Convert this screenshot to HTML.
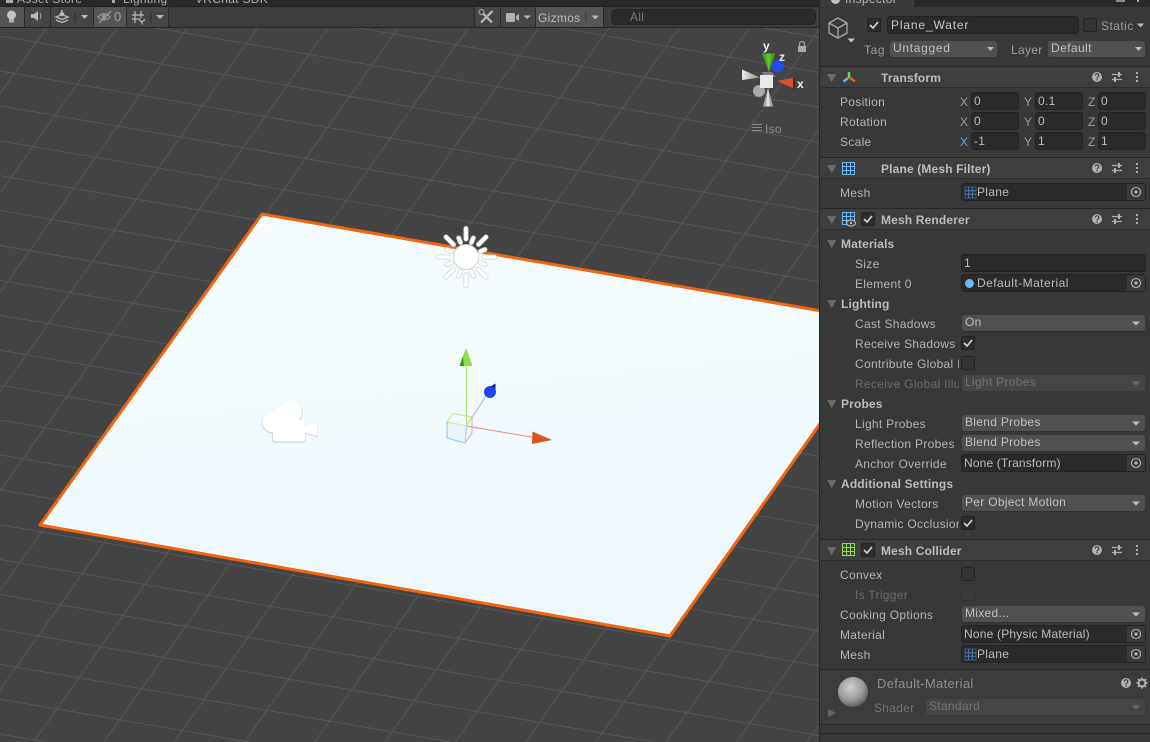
<!DOCTYPE html>
<html><head><meta charset="utf-8"><style>
html,body{margin:0;padding:0;background:#444;width:1150px;height:742px;overflow:hidden}
#r{position:relative;width:1150px;height:742px;overflow:hidden;background:#444;font-family:"Liberation Sans",sans-serif;font-size:12px;color:#b4b4b4}
#r div{position:absolute;box-sizing:border-box}
.l{white-space:nowrap;line-height:14px;letter-spacing:.3px;overflow:hidden}
.b{font-weight:bold;color:#bcbcbc;letter-spacing:.15px}
.d{color:#6e6e6e}
.f{background:#2a2a2a;border:1px solid #222;border-radius:3px;height:18px;line-height:16px;padding-left:2px;color:#bcbcbc;letter-spacing:.3px;white-space:nowrap}
.dd{background:#505050;border-radius:3px;height:17px;line-height:15px;padding-left:3px;color:#c0c0c0;letter-spacing:.3px;white-space:nowrap;border-bottom:1px solid #303030}
.dd.dim{background:#464646;color:#757575;border-bottom-color:#383838}
.cb{width:14px;height:14px;background:#2d2d2d;border:1px solid #222;border-radius:2px}
.hd{left:821px;width:329px;height:21px;background:#3e3e3e;border-bottom:1px solid #2c2c2c}
.sep{left:820px;width:330px;height:1px;background:#262626}
svg{position:absolute;overflow:hidden}
</style></head><body><div id="r">

<!-- grid + plane + gizmos -->
<svg width="820" height="742" style="left:0;top:0">
<g stroke="#5a5a5a" stroke-width=".9" fill="none">
<path d="M601 0L820 37.700M398 0L820 72.600M196 0L820 107.500M0 1.200L820 142.400M0 36.100L820 177.300M0 71L820 212.200M0 105.900L820 247.100M0 140.800L820 282M0 175.700L820 316.900M0 210.600L820 351.800M0 245.500L820 386.700M0 280.400L820 421.600M0 315.300L820 456.500M0 350.200L820 491.400M0 385.100L820 526.300M0 420L820 561.200M0 454.900L820 596.100M0 489.800L820 631M0 524.700L820 665.900M0 559.600L820 700.800M0 594.500L820 735.700M0 629.400L654 742M0 664.300L451 742M0 699.200L248.500 742M0 734.100L46 742"/>
<path d="M66.300 0L0 93.700M136.600 0L0 193M206.900 0L0 292.500M277.200 0L0 391.900M347.500 0L0 491.200M417.800 0L0 590.600M488.100 0L0 690M558.400 0L33.500 742M628.700 0L103.800 742M699 0L174.100 742M769.300 0L244.400 742M820 28.300L314.700 742M820 127.700L385 742M820 227L455.300 742M820 326.400L525.600 742M820 425.800L595.900 742M820 525.100L666.200 742M820 624.500L736.500 742M820 723.900L806.800 742"/>
</g>
<defs><linearGradient id="pl" x1="0" y1="0" x2="0.2" y2="1"><stop offset="0" stop-color="#f6fdff"/><stop offset="1" stop-color="#eef8fd"/></linearGradient>
<radialGradient id="sph" cx=".42" cy=".35" r=".7"><stop offset="0" stop-color="#cfcfcf"/><stop offset=".6" stop-color="#9a9a9a"/><stop offset="1" stop-color="#555"/></radialGradient>
<linearGradient id="lc" x1="0" y1="0" x2="1" y2="0"><stop offset="0" stop-color="#ececec"/><stop offset="1" stop-color="#8e8e8e"/></linearGradient></defs>
<polygon points="262,214 891,323 670,636 40,525" fill="url(#pl)" stroke="#f2650f" stroke-width="3" stroke-linejoin="round"/>

<!-- sun -->
<g stroke="#cfd2d3" stroke-width="5" stroke-linecap="round">
<path d="M466 228.500V239M466 275V285.500M437.500 257H448M484 257H494.500M446 237L453.500 244.500M486 237L478.500 244.500M446 277L453.500 269.500M486 277L478.500 269.500M458.700 238L460.500 242.500M473.300 238L471.500 242.500M458.700 276L460.500 271.500M473.300 276L471.500 271.500M447 249.500L451.500 251.300M485 249.500L480.500 251.300M447 264.500L451.500 262.700M485 264.500L480.500 262.700"/>
</g>
<g stroke="#fff" stroke-width="3.500" stroke-linecap="round">
<path d="M466 228.500V239M466 275V285.500M437.500 257H448M484 257H494.500M446 237L453.500 244.500M486 237L478.500 244.500M446 277L453.500 269.500M486 277L478.500 269.500M458.700 238L460.500 242.500M473.300 238L471.500 242.500M458.700 276L460.500 271.500M473.300 276L471.500 271.500M447 249.500L451.500 251.300M485 249.500L480.500 251.300M447 264.500L451.500 262.700M485 264.500L480.500 262.700"/>
</g>
<circle cx="466" cy="257" r="13" fill="#d5d8d9"/><circle cx="466" cy="257" r="12" fill="#fff"/>

<!-- camera -->
<g fill="#d5dadd" transform="translate(0 .8)">
<circle cx="291" cy="412" r="11.800"/><circle cx="272.500" cy="422" r="10.800"/><rect x="272" y="420" width="33.500" height="22" rx="3"/><path d="M304 426L318 422.500V436.500L304 433Z"/>
</g>
<g fill="#fff">
<circle cx="291" cy="412" r="11"/><circle cx="272.500" cy="422" r="10"/><rect x="273" y="420" width="32" height="21.500" rx="3"/><path d="M304 426.500L317.500 423V436L304 432.500Z"/>
<path d="M281 405L295 420H270Z"/>
</g>

<!-- move gizmo -->
<g fill="none" stroke-width="1">
<path d="M466.500 426V365" stroke="#a5e86a"/>
<path d="M466.500 426L486 396" stroke="#7fbdf2"/>
<path d="M466.500 426L534 437.500" stroke="#f08a8a"/>
<path d="M447 422L453 413.500L472 417L466.500 426Z" stroke="#b5ea83"/>
<path d="M447 422V438L465 443L466.500 426" stroke="#8cc3f0"/>
<path d="M472 417V433L465 443" stroke="#f0a0a0"/>
</g>
<path d="M447.500 422.500L466 426L465 442.500L447.500 437.500Z" fill="#e9f1f4" opacity=".8"/>
<path d="M466 348L472.500 366H459.500Z" fill="#8fdc4f"/><path d="M459.500 366L463 356L464 366Z" fill="#2f9a18"/>
<path d="M495.500 383.500V394L488 388Z" fill="#14256e"/><circle cx="490" cy="392" r="6" fill="#1f45e6"/>
<path d="M552 440L532.500 431.500L532 444Z" fill="#d9541e"/>

<!-- orientation gizmo -->
<path d="M742 69.500L760 77.500L742 80Z" fill="url(#lc)"/>
<path d="M768 87.500L773 106.500H763Z" fill="#a8a8a8"/><path d="M768 87.500L770 106.500H766Z" fill="#e0e0e0"/>
<circle cx="759" cy="91" r="6" fill="#a9a9a9"/>
<circle cx="778" cy="66" r="6.300" fill="#1f4de8"/>
<path d="M762 72L772 72L776 77L764 77Z" fill="#7d7d7d"/>
<path d="M762 53.500L775 53.500L769 72Z" fill="#47a918"/><path d="M766 53.500L771 53.500L769 72Z" fill="#5fc52c"/>
<rect x="760" y="75" width="13" height="13" fill="#e9e9e9"/>
<path d="M777 81L795 77.500V89Z" fill="#d8532a"/><path d="M793 78V89L795 89V77.500Z" fill="#3a2a24"/>
<path d="M752 124.500H762M752 127.500H762M752 130.500H762" fill="none" stroke="#8b8b8b" stroke-width="1"/>
<text x="765" y="133" font-family="Liberation Sans" font-size="12" fill="#8f8f8f" letter-spacing=".3">Iso</text>
<text x="763" y="50" font-family="Liberation Sans" font-size="12" font-weight="bold" fill="#f0f0f0">y</text>
<text x="779" y="61" font-family="Liberation Sans" font-size="12" font-weight="bold" fill="#f0f0f0">z</text>
<text x="797" y="88" font-family="Liberation Sans" font-size="12" font-weight="bold" fill="#f0f0f0">x</text>
<rect x="798" y="46" width="8" height="6" fill="#a9a9a9"/><path d="M799.500 46V44a2.500 2.500 0 0 1 5 0V46" fill="none" stroke="#a9a9a9" stroke-width="1.200"/>
</svg>

<!-- top strip -->
<div style="left:0;top:0;width:820px;height:7px;background:#292929;overflow:hidden">
<div class="l" style="left:17px;top:-8px;color:#aaa">Asset Store</div>
<div class="l" style="left:123px;top:-8px;color:#aaa">Lighting</div>
<div class="l" style="left:195px;top:-8px;color:#aaa">VRChat SDK</div>
<div style="left:6px;top:0;width:7px;height:3px;background:#aaa"></div>
<div style="left:112px;top:0;width:3px;height:3px;background:#aaa"></div>
</div>
<div style="left:0;top:6px;width:820px;height:1px;background:#1f1f1f"></div>
<!-- toolbar -->
<div style="left:0;top:7px;width:820px;height:20px;background:#3c3c3c"></div>
<div style="left:0;top:27px;width:820px;height:1px;background:#262626"></div>
<div style="left:0;top:7px;width:24px;height:20px;background:#555"></div>
<div style="left:25px;top:7px;width:25px;height:20px;background:#464646"></div>
<div style="left:51px;top:7px;width:42px;height:20px;background:#464646"></div>
<div style="left:94px;top:7px;width:32px;height:20px;background:#555"></div>
<div style="left:127px;top:7px;width:41px;height:20px;background:#464646"></div>
<div style="left:475px;top:7px;width:25px;height:20px;background:#464646"></div>
<div style="left:501px;top:7px;width:34px;height:20px;background:#464646"></div>
<div style="left:536px;top:7px;width:67px;height:20px;background:#555"></div>
<div style="left:24px;top:7px;width:1px;height:20px;background:#2c2c2c"></div>
<div style="left:50px;top:7px;width:1px;height:20px;background:#2c2c2c"></div>
<div style="left:93px;top:7px;width:1px;height:20px;background:#2c2c2c"></div>
<div style="left:126px;top:7px;width:1px;height:20px;background:#2c2c2c"></div>
<div style="left:168px;top:7px;width:1px;height:20px;background:#2c2c2c"></div>
<div style="left:474px;top:7px;width:1px;height:20px;background:#2c2c2c"></div>
<div style="left:500px;top:7px;width:1px;height:20px;background:#2c2c2c"></div>
<div style="left:535px;top:7px;width:1px;height:20px;background:#2c2c2c"></div>
<div style="left:603px;top:7px;width:1px;height:20px;background:#2c2c2c"></div>
<svg width="820" height="28" style="left:0;top:0">
<circle cx="11.500" cy="15" r="4.500" fill="#c4c4c4"/><rect x="9" y="19" width="5" height="3.500" fill="#b0b0b0"/>
<path d="M31 14H34L38 11V21L34 18H31Z" fill="#b8b8b8"/><path d="M40 13Q42 16 40 19" fill="none" stroke="#aaa"/>
<path d="M56 17L62 14.500L68 17L62 19.500Z" fill="none" stroke="#b8b8b8" stroke-width="1.300"/><path d="M56 20L62 22.500L68 20" fill="none" stroke="#b8b8b8" stroke-width="1.300"/><path d="M62 10V15M60 13L62 15.500L64 13" stroke="#c4c4c4" fill="none" stroke-width="1.500"/>
<path d="M75 13V22" stroke="#2f2f2f"/><path d="M81 15H88L84.500 19Z" fill="#b8b8b8"/>
<path d="M98 17Q104 10.500 110 17Q104 23 98 17Z" fill="none" stroke="#999" stroke-width="1.200"/><circle cx="104" cy="17" r="2.300" fill="#999"/><path d="M99 23L111 11" stroke="#999" stroke-width="1.300"/>
<g stroke="#b8b8b8" stroke-width="1.200" fill="none"><path d="M132 15H144M132 19H140M135 11V23M141 11V18"/><path d="M139 19.500L142 22V24.500M145 19.500L142 22"/></g>
<path d="M151 13V22" stroke="#2f2f2f"/><path d="M156 15H164L160 19Z" fill="#b8b8b8"/>
<g stroke="#b8b8b8" stroke-width="2.200" fill="none"><path d="M481 11.500L492 22.500"/><path d="M492.500 11L481 22.500"/></g><circle cx="481.500" cy="12" r="2.500" fill="#464646" stroke="#b8b8b8"/>
<rect x="506" y="13" width="9" height="9" rx="1" fill="#b0b0b0"/><path d="M516 16L519 14V21L516 19Z" fill="#b0b0b0"/>
<path d="M523.500 15.500H531L527.200 19Z" fill="#b8b8b8"/>
<path d="M586 12V22" stroke="#3a3a3a"/><path d="M591.500 15.500H599L595.200 19.500Z" fill="#b8b8b8"/>
<circle cx="618.500" cy="16.500" r="2" fill="none" stroke="#a5a5a5"/><path d="M620 18L622.500 20M623 16.500H625.500L624.200 18Z" fill="none" stroke="#a5a5a5"/>
</svg>
<div class="l" style="left:114px;top:10px;color:#a0a0a0;font-size:13px">0</div>
<div class="l" style="left:538px;top:11px;color:#bcbcbc">Gizmos</div>
<div style="left:611px;top:9px;width:205px;height:16px;background:#2a2a2a;border:1px solid #222;border-radius:5px"></div>
<div class="l" style="left:630px;top:10px;color:#757575">All</div>

<!-- inspector -->
<div style="left:819px;top:0;width:1px;height:742px;background:#262626"></div>
<div style="left:820px;top:0;width:330px;height:742px;background:#383838"></div>
<div style="left:820px;top:0;width:330px;height:7px;background:#292929"></div>
<div style="left:820px;top:0;width:94px;height:7px;background:#3c3c3c;overflow:hidden">
<div class="l" style="left:25px;top:-8px;color:#b4b4b4">Inspector</div>
<div style="left:11px;top:-5px;width:9px;height:9px;border-radius:50%;background:#c4c4c4"></div>
</div>
<div style="left:1116px;top:0;width:9px;height:2px;background:#8a8a8a"></div>
<div style="left:1137px;top:0;width:2px;height:2px;background:#aaa"></div>

<!-- object header -->
<svg width="330" height="70" style="left:820px;top:0">
<g fill="none" stroke="#a8a8a8" stroke-width="1.300" stroke-linejoin="round"><path d="M18 18L27 23V33L18 38L9 33V23Z"/><path d="M9 23L18 28L27 23M18 28V38"/></g>
<path d="M27.500 38.500H35L31.200 42.500Z" fill="#c4c4c4"/>
</svg>
<div class="cb" style="left:867px;top:18px"></div>
<div class="f" style="left:887px;top:16px;width:192px;height:18px;color:#c8c8c8;border-radius:4px;letter-spacing:.85px;padding-left:3px">Plane_Water</div>
<div class="cb" style="left:1083px;top:18px;background:#333"></div>
<div class="l" style="left:1101px;top:19px;color:#9e9e9e;letter-spacing:.45px">Static</div>
<div class="l" style="left:864px;top:43px;color:#9e9e9e;letter-spacing:.6px">Tag</div>
<div class="dd" style="left:890px;top:41px;width:107px;letter-spacing:.7px">Untagged</div>
<div class="l" style="left:1011px;top:43px;color:#9e9e9e">Layer</div>
<div class="dd" style="left:1048px;top:41px;width:97px;letter-spacing:.4px">Default</div>
<div class="sep" style="top:66px"></div>

<!-- headers -->
<div class="hd" style="top:67px"></div>
<div class="l b" style="left:881px;top:71px">Transform</div>
<div class="sep" style="top:157px"></div>
<div class="hd" style="top:158px"></div>
<div class="l b" style="left:881px;top:162px">Plane (Mesh Filter)</div>
<div class="sep" style="top:208px"></div>
<div class="hd" style="top:209px"></div>
<div class="l b" style="left:881px;top:213px">Mesh Renderer</div>
<div class="cb" style="left:861px;top:212px"></div>
<div class="sep" style="top:539px"></div>
<div class="hd" style="top:540px"></div>
<div class="l b" style="left:881px;top:544px">Mesh Collider</div>
<div class="cb" style="left:861px;top:543px"></div>

<!-- transform -->
<div class="l" style="left:840px;top:95px">Position</div>
<div class="l" style="left:840px;top:115px">Rotation</div>
<div class="l" style="left:840px;top:135px">Scale</div>
<div class="l" style="left:960px;top:95px;color:#9e9e9e">X</div><div class="f" style="left:971px;top:92px;width:48px">0</div>
<div class="l" style="left:1024px;top:95px;color:#9e9e9e">Y</div><div class="f" style="left:1035px;top:92px;width:48px">0.1</div>
<div class="l" style="left:1088px;top:95px;color:#9e9e9e">Z</div><div class="f" style="left:1098px;top:92px;width:48px">0</div>
<div class="l" style="left:960px;top:115px;color:#9e9e9e">X</div><div class="f" style="left:971px;top:112px;width:48px">0</div>
<div class="l" style="left:1024px;top:115px;color:#9e9e9e">Y</div><div class="f" style="left:1035px;top:112px;width:48px">0</div>
<div class="l" style="left:1088px;top:115px;color:#9e9e9e">Z</div><div class="f" style="left:1098px;top:112px;width:48px">0</div>
<div class="l" style="left:960px;top:135px;color:#5fa8ec">X</div><div class="f" style="left:971px;top:132px;width:48px">-1</div>
<div class="l" style="left:1024px;top:135px;color:#9e9e9e">Y</div><div class="f" style="left:1035px;top:132px;width:48px">1</div>
<div class="l" style="left:1088px;top:135px;color:#9e9e9e">Z</div><div class="f" style="left:1098px;top:132px;width:48px">1</div>

<!-- mesh filter -->
<div class="l" style="left:840px;top:186px">Mesh</div>
<div class="f" style="left:961px;top:183px;width:185px;padding-left:15px">Plane</div>

<!-- mesh renderer -->
<div class="l b" style="left:841px;top:237px">Materials</div>
<div class="l" style="left:855px;top:257px">Size</div><div class="f" style="left:961px;top:254px;width:185px">1</div>
<div class="l" style="left:855px;top:277px">Element 0</div><div class="f" style="left:961px;top:274px;width:185px;padding-left:15px;letter-spacing:.45px">Default-Material</div>
<div class="l b" style="left:841px;top:297px">Lighting</div>
<div class="l" style="left:855px;top:317px">Cast Shadows</div><div class="dd" style="left:962px;top:315px;width:183px">On</div>
<div class="l" style="left:855px;top:337px">Receive Shadows</div><div class="cb" style="left:961px;top:336px"></div>
<div class="l" style="left:855px;top:357px;width:104px">Contribute Global Illumination</div><div class="cb" style="left:961px;top:356px;background:#333"></div>
<div class="l d" style="left:855px;top:377px;width:104px">Receive Global Illumination</div><div class="dd dim" style="left:962px;top:375px;width:183px">Light Probes</div>
<div class="l b" style="left:841px;top:397px">Probes</div>
<div class="l" style="left:855px;top:417px">Light Probes</div><div class="dd" style="left:962px;top:415px;width:183px">Blend Probes</div>
<div class="l" style="left:855px;top:437px">Reflection Probes</div><div class="dd" style="left:962px;top:435px;width:183px">Blend Probes</div>
<div class="l" style="left:855px;top:457px">Anchor Override</div><div class="f" style="left:961px;top:454px;width:185px;letter-spacing:.15px">None (Transform)</div>
<div class="l b" style="left:841px;top:477px">Additional Settings</div>
<div class="l" style="left:855px;top:497px">Motion Vectors</div><div class="dd" style="left:962px;top:495px;width:183px">Per Object Motion</div>
<div class="l" style="left:855px;top:517px;width:104px">Dynamic Occlusion</div><div class="cb" style="left:961px;top:516px"></div>

<!-- mesh collider -->
<div class="l" style="left:840px;top:568px">Convex</div><div class="cb" style="left:961px;top:567px;background:#333"></div>
<div class="l d" style="left:855px;top:588px">Is Trigger</div><div class="cb" style="left:961px;top:587px;background:#3a3a3a;border-color:#323232"></div>
<div class="l" style="left:840px;top:608px">Cooking Options</div><div class="dd" style="left:962px;top:606px;width:183px">Mixed...</div>
<div class="l" style="left:840px;top:628px">Material</div><div class="f" style="left:961px;top:625px;width:185px;letter-spacing:.2px">None (Physic Material)</div>
<div class="l" style="left:840px;top:648px">Mesh</div><div class="f" style="left:961px;top:645px;width:185px;padding-left:15px">Plane</div>

<!-- object-field pick buttons -->
<div style="left:1127px;top:184px;width:18px;height:16px;background:#3a3a3a"></div>
<div style="left:1127px;top:275px;width:18px;height:16px;background:#3a3a3a"></div>
<div style="left:1127px;top:455px;width:18px;height:16px;background:#3a3a3a"></div>
<div style="left:1127px;top:626px;width:18px;height:16px;background:#3a3a3a"></div>
<div style="left:1127px;top:646px;width:18px;height:16px;background:#3a3a3a"></div>

<!-- material footer -->
<div class="sep" style="top:669px"></div>
<div style="left:820px;top:670px;width:330px;height:54px;background:#3c3c3c"></div>
<div class="sep" style="top:724px"></div>
<div class="sep" style="top:733px"></div>
<div class="l" style="left:877px;top:677px;color:#8f8f8f;font-size:13px;letter-spacing:.3px">Default-Material</div>
<div class="l" style="left:874px;top:701px;color:#757575">Shader</div>
<div class="dd dim" style="left:926px;top:699px;width:219px">Standard</div>

<!-- inspector icons -->
<svg width="330" height="742" style="left:820px;top:0">
<defs>
<g id="fold"><path d="M7 0H16.500L11.700 8Z" fill="#6c6c6c"/></g>
<g id="act">
<circle cx="277" cy="0" r="5" fill="#b0b0b0"/><path d="M275.200 -1.500a1.800 1.800 0 1 1 2.800 1.500q-1 .5-1 1.500" fill="none" stroke="#3e3e3e" stroke-width="1.200"/><rect x="276.400" y="2.200" width="1.300" height="1.300" fill="#3e3e3e"/>
<path d="M292 -2.500H302M292 2.500H302" stroke="#b0b0b0" stroke-width="1.300"/><path d="M299 -5V0M295 0V5" stroke="#b0b0b0" stroke-width="2"/>
<g fill="#b0b0b0"><rect x="316" y="-5" width="2" height="2"/><rect x="316" y="-1" width="2" height="2"/><rect x="316" y="3" width="2" height="2"/></g>
</g>
<g id="chk"><path d="M3 7L6 10L11 4" fill="none" stroke="#d8d8d8" stroke-width="1.600"/></g>
<g id="tgt"><circle cx="316" cy="0" r="4.500" fill="none" stroke="#b4b4b4" stroke-width="1.100"/><circle cx="316" cy="0" r="1.600" fill="#b4b4b4"/></g>
<g id="mesh"><rect x="0" y="0" width="11" height="11" fill="none" stroke="#3a5a88"/><path d="M0 3.700H11M0 7.300H11M3.700 0V11M7.300 0V11" stroke="#4f7db8" stroke-width="1"/></g>
<g id="grid"><path d="M.500 .500H12.500V12.500H.500ZM.500 4.500H12.500M.500 8.500H12.500M4.500 .500V12.500M8.500 .500V12.500" fill="none"/></g>
</defs>

<use href="#fold" y="74"/><use href="#fold" y="165"/><use href="#fold" y="216"/><use href="#fold" y="547"/>
<use href="#fold" y="240"/><use href="#fold" y="300"/><use href="#fold" y="400"/><use href="#fold" y="480"/>
<path d="M8 709L16 713L8 717Z" fill="#666"/>

<use href="#act" y="77"/><use href="#act" y="168"/><use href="#act" y="219"/><use href="#act" y="550"/>

<path d="M29 72V78" stroke="#7ed24a" stroke-width="2.500"/><path d="M28 78L23.500 81.500" stroke="#6ab3ee" stroke-width="2.500"/><path d="M30 78L35 81.500" stroke="#e0602f" stroke-width="2.500"/>

<use href="#grid" x="22" y="162" stroke="#6eb4f0"/>
<use href="#grid" x="22" y="212" stroke="#6eb4f0"/>
<ellipse cx="31" cy="223" rx="4.500" ry="3" fill="#3e3e3e" stroke="#b8b8b8" stroke-width="1.200"/><circle cx="31" cy="223" r="1.200" fill="#b8b8b8"/>
<use href="#grid" x="22" y="543" stroke="#8fe04a"/>

<use href="#chk" x="47" y="18"/><use href="#chk" x="41" y="212"/><use href="#chk" x="41" y="543"/><use href="#chk" x="141" y="336"/><use href="#chk" x="141" y="516"/>

<use href="#tgt" y="192"/><use href="#tgt" y="283"/><use href="#tgt" y="463"/><use href="#tgt" y="634"/><use href="#tgt" y="654"/>

<use href="#mesh" x="145" y="187"/><use href="#mesh" x="145" y="649"/>
<circle cx="149.500" cy="283.500" r="4.500" fill="#6db9f5"/><path d="M150 279a4.500 4.500 0 0 1 0 9a5 5 0 0 0 4-4.500a5 5 0 0 0-4-4.500Z" fill="#26344a"/>

<g fill="#bcbcbc">
<path d="M317 23.500H324L320.500 27.500Z"/>
<path d="M167 47H174L170.500 51Z"/><path d="M315 47H322L318.500 51Z"/>
<path d="M312 321.500H320L316 325.500Z"/><path d="M312 421.500H320L316 425.500Z"/><path d="M312 441.500H320L316 445.500Z"/><path d="M312 501.500H320L316 505.500Z"/><path d="M312 612.500H320L316 616.500Z"/>
</g>
<g fill="#6c6c6c"><path d="M312 381.500H320L316 385.500Z"/><path d="M312 705.500H320L316 709.500Z"/></g>

<circle cx="33" cy="692" r="15" fill="url(#sph)"/>
<circle cx="306" cy="683" r="5" fill="#b0b0b0"/><path d="M304.200 681.500a1.800 1.800 0 1 1 2.800 1.500q-1 .5-1 1.500" fill="none" stroke="#3c3c3c" stroke-width="1.200"/><rect x="305.400" y="685.200" width="1.300" height="1.300" fill="#3c3c3c"/>
<circle cx="322" cy="683" r="3.400" fill="none" stroke="#b0b0b0" stroke-width="2"/><path d="M322 677.500V679.500M322 686.500V688.500M316.500 683H318.500M325.500 683H327.500M318 679L319.500 680.500M326 687L324.500 685.500M318 687L319.500 685.500M326 679L324.500 680.500" stroke="#b0b0b0" stroke-width="1.800"/>
</svg>
</div></body></html>
